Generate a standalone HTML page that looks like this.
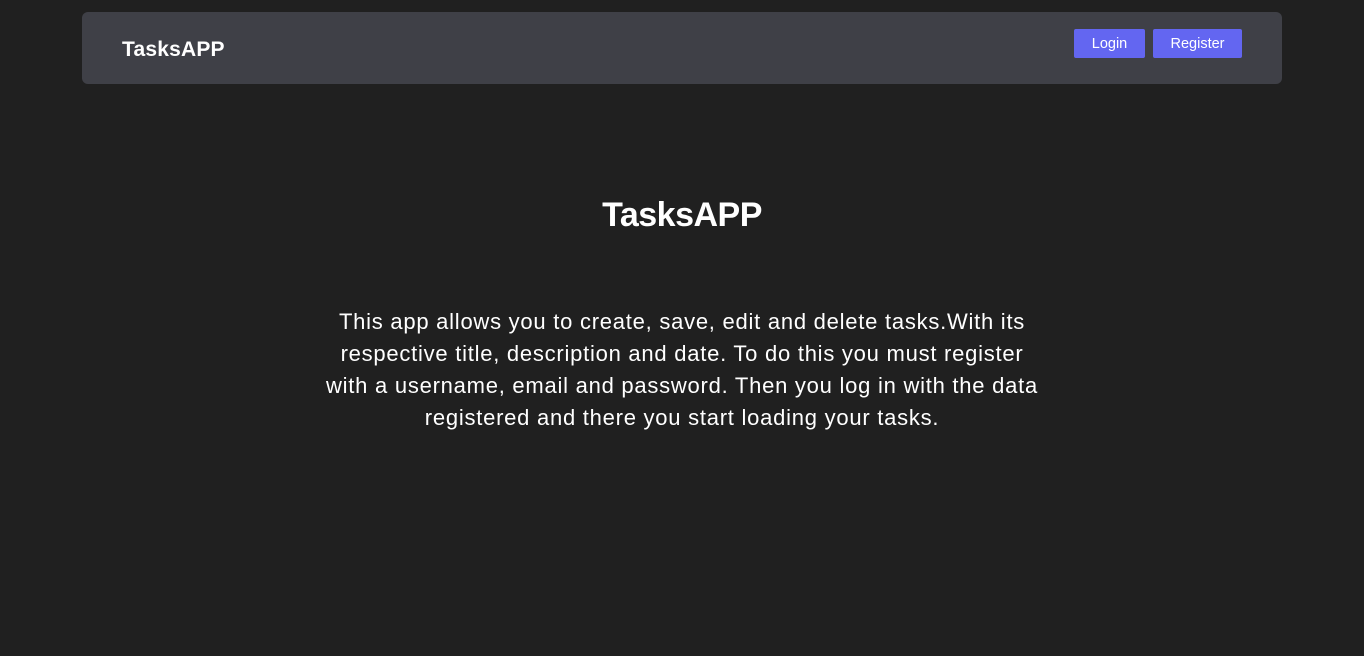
<!DOCTYPE html>
<html><head><style>
html,body{margin:0;padding:0;background:#202020;width:1364px;height:656px;overflow:hidden;font-family:"Liberation Sans",sans-serif;color:#fff}
nav{position:absolute;left:82px;top:12px;width:1200px;height:72px;background:#3f4047;border-radius:6px}
.brand{position:absolute;left:40px;top:26px;font-size:21px;font-weight:bold;letter-spacing:0.2px}
.btn{position:absolute;top:17px;height:29px;background:#6366f1;border-radius:2px;font-size:14.5px;line-height:31px;text-align:center;color:#fff}
h1{position:absolute;left:0;width:1364px;top:193px;margin:0;text-align:center;font-size:34px;line-height:44px;letter-spacing:-0.5px}
p{position:absolute;left:0;width:1364px;top:306px;margin:0;text-align:center;font-size:22px;line-height:32px;letter-spacing:0.75px;white-space:nowrap}
</style></head><body>
<nav><div class="brand">TasksAPP</div>
<div class="btn" style="left:992px;width:71px">Login</div>
<div class="btn" style="left:1071px;width:89px">Register</div></nav>
<h1>TasksAPP</h1>
<p>This app allows you to create, save, edit and delete tasks.With its<br>respective title, description and date. To do this you must register<br>with a username, email and password. Then you log in with the data<br>registered and there you start loading your tasks.</p>
</body></html>
